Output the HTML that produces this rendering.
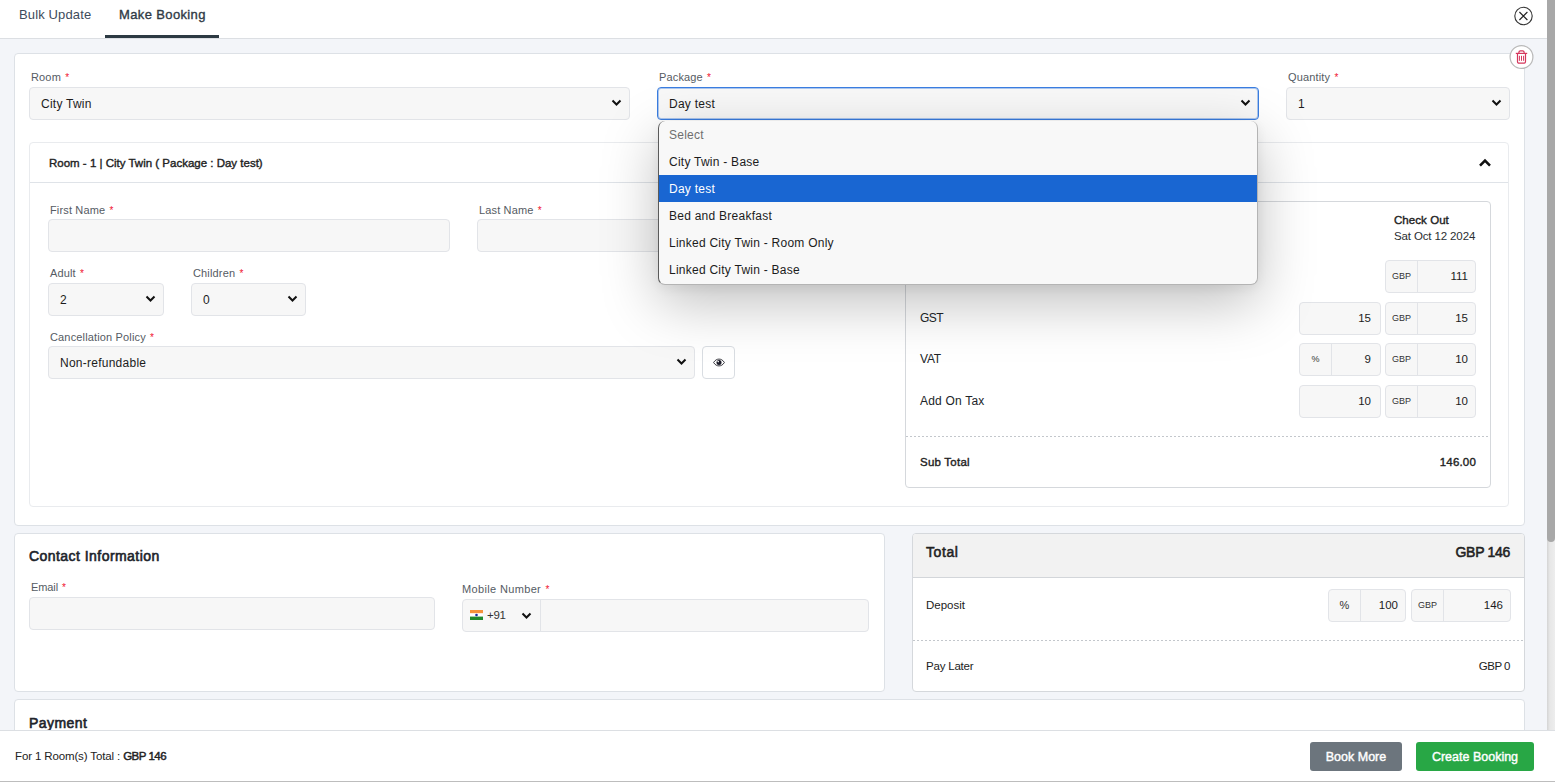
<!DOCTYPE html>
<html lang="en">
<head>
<meta charset="utf-8">
<title>Make Booking</title>
<style>
*{box-sizing:border-box;margin:0;padding:0}
html,body{width:1555px;height:782px;overflow:hidden}
body{position:relative;background:#f3f5f9;font-family:"Liberation Sans",Arial,sans-serif;font-size:12px;color:#212529;letter-spacing:0.25px}
.abs{position:absolute}
.dash{height:1px;background:repeating-linear-gradient(90deg,#c3c7cc 0 2px,transparent 2px 4px)}
.sb{color:#222;-webkit-text-stroke:0.38px #222;letter-spacing:0;font-size:11.5px}
/* top tabs */
#tabs{position:absolute;left:0;top:0;width:1547px;height:39px;background:#fff;border-bottom:1px solid #dcdfe3}
#tabs .tab{position:absolute;top:6px;font-size:13px;line-height:18px;color:#3e4b5b;white-space:nowrap;letter-spacing:0.13px}
#tabs .active{color:#2f3a45;-webkit-text-stroke:0.35px #2f3a45;letter-spacing:0.37px}
#tabs .bar{position:absolute;left:105px;top:35px;width:114px;height:3px;background:#2d3a43}
/* cards */
.card{position:absolute;background:#fff;border:1px solid #dde1e6;border-radius:4px}
label.l{position:absolute;font-size:11px;line-height:14px;color:#555b63;white-space:nowrap;letter-spacing:0.15px;margin-top:0}
label.l i{color:#f0142f;font-style:normal;margin-left:1px;font-size:10px}
.inp{position:absolute;height:33px;background:#f7f7f7;border:1px solid #e2e4e8;border-radius:4px;font-size:12px;line-height:33px;padding-left:11px;color:#1c1c1c;white-space:nowrap}
.inp svg.chev{position:absolute;right:7.5px;top:10.5px}
.focus{border:1px solid #3a7de0;box-shadow:inset 0 0 0 1px rgba(58,125,224,.4);background:#f8f8f8}
h3{position:absolute;font-size:14px;line-height:18px;font-weight:normal;color:#20242b;-webkit-text-stroke:0.6px #20242b;letter-spacing:0.45px;white-space:nowrap}
/* price groups */
.grp{position:absolute;height:33px;background:#f7f7f7;border:1px solid #e2e4e8;border-radius:4px;font-size:11.5px;color:#1c1c1c;letter-spacing:0}
.grp .ad{position:absolute;left:0;top:0;bottom:0;width:32px;border-right:1px solid #e2e4e8;font-size:9px;line-height:31px;text-align:center;color:#333}
.grp .v{position:absolute;right:9px;top:0;line-height:31px}
.rowl{position:absolute;font-size:12px;line-height:16px;color:#212529;white-space:nowrap;letter-spacing:0}
/* dropdown */
#dd{position:absolute;left:658px;top:121px;width:600px;height:164px;background:#f8f8f8;border:1px solid #b4b4b4;border-left-color:#5a5a5a;border-top:0;border-radius:7px;box-shadow:0 18px 56px rgba(0,0,0,.25),0 3px 12px rgba(0,0,0,.06);overflow:hidden}
#dd div{height:27px;line-height:28px;padding-left:10px;font-size:12px;color:#1c1c1c;white-space:nowrap}
#dd .ph{color:#6f6f6f}
#dd .sel{background:#1966d2;color:#fff}
/* footer */
#foot{position:absolute;left:0;top:730px;width:1555px;height:52px;background:#fff;border-top:1px solid #dcdfe3;border-bottom:1px solid #bdbdbd}
.btn{position:absolute;top:11px;height:29px;border-radius:3px;color:#fff;font-size:12.5px;-webkit-text-stroke:0.4px #fff;letter-spacing:0;line-height:30.5px;text-align:center;white-space:nowrap}
/* scrollbar */
#sb{position:absolute;left:1547px;top:0;width:8px;height:730px;background:linear-gradient(90deg,#d4d4d4,#e7e7e7 35%,#ededed)}
#sb b{position:absolute;left:0;top:0;width:8px;height:542px;background:#a8a8a8;border-radius:0 0 4px 4px}
</style>
</head>
<body>

<div id="tabs">
  <span class="tab" style="left:19px">Bulk Update</span>
  <span class="tab active" style="left:119px">Make Booking</span>
  <span class="bar"></span>
  <svg class="abs" style="left:1513px;top:6px" width="21" height="20" viewBox="0 0 21 20"><circle cx="10.5" cy="10" r="8.7" fill="none" stroke="#333" stroke-width="1.1"/><path d="M6.4 6l8 8M14.4 6l-8 8" stroke="#222" stroke-width="1.1" fill="none"/></svg>
</div>

<!-- main room card -->
<div class="card" style="left:14px;top:53px;width:1511px;height:473px"></div>

<label class="l" style="left:31px;top:70px">Room <i>*</i></label>
<div class="inp" style="left:29px;top:87px;width:601px">City Twin<svg class="chev" width="11" height="8" viewBox="0 0 11 8"><path d="M1.5 1.5l4 4 4-4" fill="none" stroke="#111" stroke-width="2"/></svg></div>

<label class="l" style="left:659px;top:70px">Package <i>*</i></label>
<div class="inp focus" style="left:657px;top:87px;width:602px">Day test<svg class="chev" width="11" height="8" viewBox="0 0 11 8"><path d="M1.5 1.5l4 4 4-4" fill="none" stroke="#111" stroke-width="2"/></svg></div>

<label class="l" style="left:1288px;top:70px">Quantity <i>*</i></label>
<div class="inp" style="left:1286px;top:87px;width:224px">1<svg class="chev" width="11" height="8" viewBox="0 0 11 8"><path d="M1.5 1.5l4 4 4-4" fill="none" stroke="#111" stroke-width="2"/></svg></div>

<!-- inner accordion -->
<div class="card" style="left:29px;top:142px;width:1480px;height:365px;border-color:#e9ebee"></div>
<div class="abs" style="left:30px;top:182px;width:1478px;height:1px;background:#dfe3e8"></div>
<div class="abs sb" style="left:49px;top:155px;line-height:16px;white-space:nowrap">Room - 1 | City Twin ( Package : Day test)</div>
<svg class="abs" style="left:1478px;top:157px" width="14" height="11" viewBox="0 0 14 11"><path d="M2 8.600l5-5 5 5" fill="none" stroke="#111" stroke-width="2.600"/></svg>

<label class="l" style="left:50px;top:203px">First Name <i>*</i></label>
<div class="inp" style="left:48px;top:219px;width:402px"></div>
<label class="l" style="left:479px;top:203px">Last Name <i>*</i></label>
<div class="inp" style="left:477px;top:219px;width:402px"></div>

<label class="l" style="left:50px;top:266px">Adult <i>*</i></label>
<div class="inp" style="left:48px;top:283px;width:116px">2<svg class="chev" width="11" height="8" viewBox="0 0 11 8"><path d="M1.5 1.5l4 4 4-4" fill="none" stroke="#111" stroke-width="2"/></svg></div>
<label class="l" style="left:193px;top:266px">Children <i>*</i></label>
<div class="inp" style="left:191px;top:283px;width:115px">0<svg class="chev" width="11" height="8" viewBox="0 0 11 8"><path d="M1.5 1.5l4 4 4-4" fill="none" stroke="#111" stroke-width="2"/></svg></div>

<label class="l" style="left:50px;top:330px">Cancellation Policy <i>*</i></label>
<div class="inp" style="left:48px;top:346px;width:647px">Non-refundable<svg class="chev" width="11" height="8" viewBox="0 0 11 8"><path d="M1.5 1.5l4 4 4-4" fill="none" stroke="#111" stroke-width="2"/></svg></div>
<div class="abs" style="left:702px;top:346px;width:33px;height:33px;background:#fff;border:1px solid #d9dde2;border-radius:4px">
  <svg class="abs" style="left:10px;top:11px" width="12" height="9" viewBox="0 -0.500 12 9"><path d="M0.6 4C2.2 1.5 4 .6 6 .6s3.800 .9 5.400 3.400C9.800 6.500 8 7.400 6 7.400S2.200 6.500 .6 4z" fill="#fff" stroke="#26262e" stroke-width=".9"/><circle cx="6" cy="4" r="2.500" fill="#1b1b28"/><circle cx="5.200" cy="3.100" r=".8" fill="#fff"/></svg>
</div>

<!-- price panel -->
<div class="card" style="left:905px;top:201px;width:586px;height:287px;border-color:#d5d8dc"></div>
<div class="abs sb" style="left:1394px;top:212px;line-height:16px;letter-spacing:0.06px;white-space:nowrap">Check Out</div>
<div class="abs" style="left:1394px;top:228px;font-size:11.5px;line-height:16px;letter-spacing:-0.13px;color:#2b2f33;white-space:nowrap">Sat Oct 12 2024</div>

<div class="grp" style="left:1385px;top:260px;width:91px"><span class="ad">GBP</span><span class="v" style="right:7px">111</span></div>

<div class="rowl" style="left:920px;top:310px;letter-spacing:-0.6px">GST</div>
<div class="grp" style="left:1299px;top:302px;width:82px"><span class="v">15</span></div>
<div class="grp" style="left:1385px;top:302px;width:91px"><span class="ad">GBP</span><span class="v" style="right:7px">15</span></div>

<div class="rowl" style="left:920px;top:351px;letter-spacing:-0.2px">VAT</div>
<div class="grp" style="left:1299px;top:343px;width:82px"><span class="ad">%</span><span class="v">9</span></div>
<div class="grp" style="left:1385px;top:343px;width:91px"><span class="ad">GBP</span><span class="v" style="right:7px">10</span></div>

<div class="rowl" style="left:920px;top:393px;letter-spacing:0.2px">Add On Tax</div>
<div class="grp" style="left:1299px;top:385px;width:82px"><span class="v">10</span></div>
<div class="grp" style="left:1385px;top:385px;width:91px"><span class="ad">GBP</span><span class="v" style="right:7px">10</span></div>

<div class="abs dash" style="left:906px;top:436px;width:584px"></div>
<div class="abs sb" style="left:920px;top:454px;line-height:16px;letter-spacing:0.23px;white-space:nowrap">Sub Total</div>
<div class="abs sb" style="right:79px;top:454px;line-height:16px;letter-spacing:0.18px;white-space:nowrap">146.00</div>

<!-- trash -->
<svg class="abs" style="left:1509px;top:45px" width="26" height="26" viewBox="0 0 26 26"><circle cx="12.5" cy="12" r="11.4" fill="#fff" stroke="#b9b9b9" stroke-width="1.2"/><g fill="none" stroke="#d5375c" stroke-width="1.2"><path d="M6.8 8.4h11.4"/><path d="M9.9 8.2v-.9a1.5 1.5 0 0 1 1.5-1.5h2.2a1.5 1.5 0 0 1 1.5 1.5v.9"/><path d="M8.5 8.6v8.2a1.4 1.4 0 0 0 1.4 1.4h5.2a1.4 1.4 0 0 0 1.4-1.4V8.6"/><path d="M10.4 10.8v5M12.5 10.8v5M14.6 10.8v5" stroke-width="1"/></g></svg>

<!-- contact card -->
<div class="card" style="left:14px;top:533px;width:871px;height:159px"></div>
<h3 style="left:29px;top:547px">Contact Information</h3>
<label class="l" style="left:31px;top:580px;letter-spacing:-0.1px">Email <i>*</i></label>
<div class="inp" style="left:29px;top:597px;width:406px"></div>
<label class="l" style="left:462px;top:582px;letter-spacing:0.35px">Mobile Number <i>*</i></label>
<div class="inp" style="left:462px;top:599px;width:407px;padding:0">
  <div class="abs" style="left:77px;top:0;width:1px;height:31px;background:#e2e4e8"></div>
  <svg class="abs" style="left:7px;top:10px" width="13" height="10" viewBox="0 0 13 10"><rect width="13" height="3.4" fill="#f4923a"/><rect y="3.4" width="13" height="3.3" fill="#fff"/><rect y="6.6" width="13" height="3.4" fill="#1f8a2c"/><circle cx="6.5" cy="5" r="1.3" fill="#1a2a9c"/></svg>
  <span class="abs" style="left:24px;top:-1px;font-size:11.5px;letter-spacing:-0.3px;color:#333">+91</span>
  <svg class="abs" style="left:58px;top:11.5px" width="11" height="8" viewBox="0 0 11 8"><path d="M1.5 1.5l4 4 4-4" fill="none" stroke="#111" stroke-width="2"/></svg>
</div>

<!-- total card -->
<div class="card" style="left:912px;top:533px;width:613px;height:159px;overflow:hidden;border-color:#d5d8dc">
  <div class="abs" style="left:0;top:0;width:611px;height:44px;background:#f2f2f2;border-bottom:1px solid #d3d6da"></div>
  <div class="abs" style="left:13px;top:9px;font-size:14px;line-height:18px;-webkit-text-stroke:0.55px #222;letter-spacing:0.6px;color:#222">Total</div>
  <div class="abs" style="right:14px;top:9px;font-size:14px;line-height:18px;-webkit-text-stroke:0.55px #222;letter-spacing:-0.3px;color:#222;white-space:nowrap">GBP 146</div>
  <div class="abs" style="left:13px;top:63px;font-size:11.5px;line-height:16px;letter-spacing:0;color:#222">Deposit</div>
  <div class="abs dash" style="left:0;top:106px;width:611px"></div>
  <div class="abs" style="left:13px;top:124px;font-size:11.5px;line-height:16px;letter-spacing:-0.2px;color:#222;white-space:nowrap">Pay Later</div>
  <div class="abs" style="right:14px;top:124px;font-size:11.5px;line-height:16px;letter-spacing:-0.5px;color:#222;white-space:nowrap">GBP 0</div>
</div>
<div class="grp" style="left:1328px;top:589px;width:78px"><span class="ad" style="font-size:11px">%</span><span class="v" style="right:7px">100</span></div>
<div class="grp" style="left:1411px;top:589px;width:100px"><span class="ad">GBP</span><span class="v" style="right:7px">146</span></div>

<!-- payment card -->
<div class="card" style="left:14px;top:699px;width:1511px;height:100px"></div>
<h3 style="left:29px;top:714px">Payment</h3>

<!-- package dropdown -->
<div id="dd">
  <div class="ph">Select</div>
  <div>City Twin - Base</div>
  <div class="sel">Day test</div>
  <div>Bed and Breakfast</div>
  <div>Linked City Twin - Room Only</div>
  <div>Linked City Twin - Base</div>
</div>

<!-- footer -->
<div id="foot">
  <div class="abs" style="left:15px;top:17px;font-size:11.5px;line-height:16px;letter-spacing:-0.13px;color:#222;white-space:nowrap">For 1 Room(s) Total : <b style="font-weight:normal;-webkit-text-stroke:0.45px #222;letter-spacing:-0.5px">GBP 146</b></div>
  <div class="btn" style="left:1310px;width:92px;background:#6c757d">Book More</div>
  <div class="btn" style="left:1416px;width:118px;background:#28a745">Create Booking</div>
</div>

<div id="sb"><b></b></div>

</body>
</html>
